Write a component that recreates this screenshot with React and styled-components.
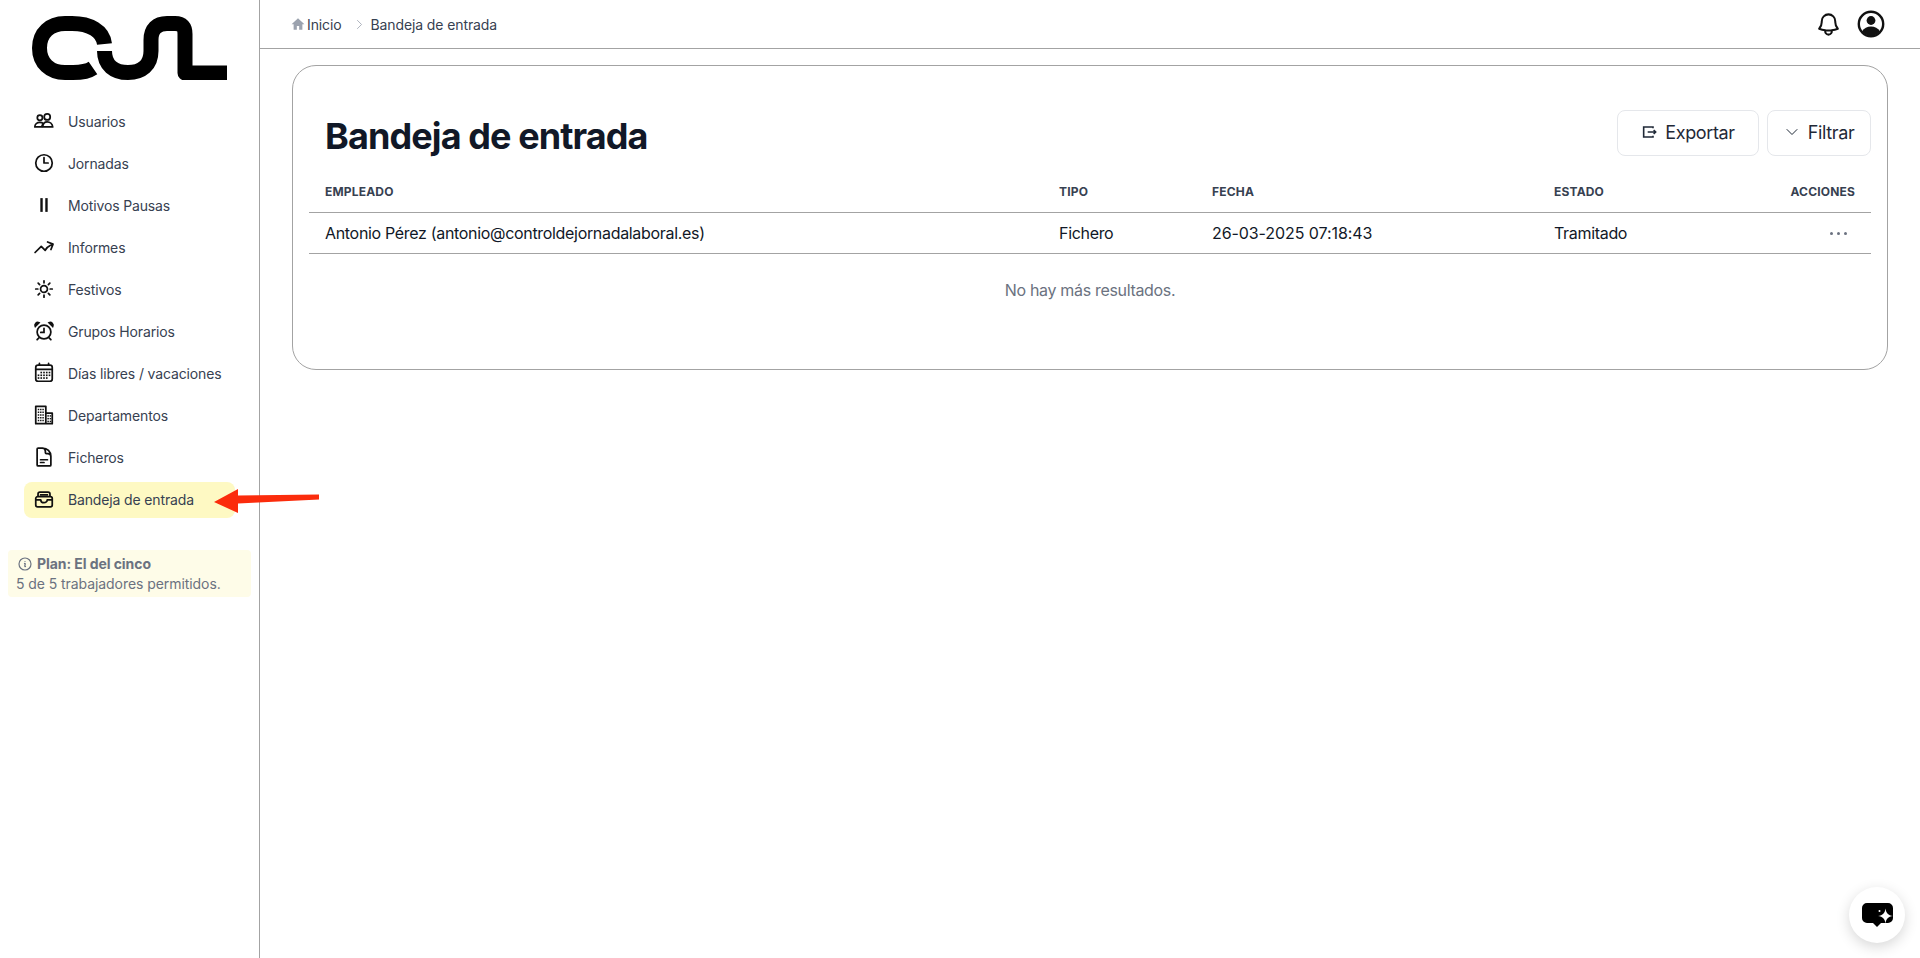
import styled, { createGlobalStyle } from "styled-components";
import {
  HiOutlineClock,
  HiOutlineArrowTrendingUp,
  HiOutlineSun,
  HiOutlineDocumentText,
  HiOutlineInformationCircle,
  HiOutlineBell,
  HiOutlineChevronRight,
  HiOutlineChevronDown,
} from "react-icons/hi2";

const GlobalStyle = createGlobalStyle`
  * { box-sizing: border-box; }
  html, body { margin: 0; padding: 0; background: #fff; }
  body {
    font-family: Inter, "Liberation Sans", sans-serif;
    letter-spacing: -0.02em;
    overflow: hidden;
  }
`;

const Layout = styled.div`
  display: flex;
  min-height: 958px;
`;
const Sidebar = styled.aside`
  width: 260px;
  flex-shrink: 0;
  border-right: 1px solid #a3a3a3;
  padding-top: 16px;
`;
const Logo = styled.svg`
  display: block;
  margin-left: 32px;
  width: 195px;
  height: 64px;
`;
const Nav = styled.nav`
  display: flex;
  flex-direction: column;
  gap: 6px;
  margin: 24px 24px 0;
  width: 211px;
`;
const NavItem = styled.a`
  display: flex;
  align-items: center;
  gap: 13px;
  height: 36px;
  padding: 0 0 2px 9px;
  border-radius: 8px;
  font-size: 14px;
  letter-spacing: -0.01em;
  color: #374151;
  background: ${(p) => (p.$active ? "#fef9c3" : "transparent")};
`;
const NavIcon = styled.span`
  display: flex;
  width: 22px;
  height: 22px;
  color: #111;
  svg {
    width: 22px;
    height: 22px;
    stroke-width: 1.9;
  }
`;
const PlanBox = styled.div`
  margin: 32px 8px 0 8px;
  padding: 4px 8px 3px;
  height: 47px;
  background: #fefce8;
  border-radius: 4px;
  font-size: 14px;
  line-height: 20px;
  letter-spacing: -0.005em;
  color: #6b7280;
`;
const PlanTitle = styled.div`
  display: flex;
  align-items: center;
  gap: 4px;
  font-weight: 700;
  padding-left: 1px;
  svg {
    width: 16px;
    height: 16px;
    stroke-width: 1.8;
  }
`;
const Main = styled.main`
  flex: 1;
  min-width: 0;
`;
const TopBar = styled.header`
  display: flex;
  align-items: center;
  justify-content: space-between;
  height: 49px;
  padding: 0 32px;
  border-bottom: 1px solid #a3a3a3;
`;
const Breadcrumb = styled.div`
  display: flex;
  align-items: center;
  font-size: 14px;
  letter-spacing: -0.008em;
  color: #374151;
`;
const HomeIcon = styled.svg`
  width: 14px;
  height: 14px;
  color: #9ca3af;
  margin: 0 2px 0 -1px;
`;
const CrumbArrow = styled(HiOutlineChevronRight)`
  width: 13px;
  height: 13px;
  color: #9ca3af;
  margin: 0 5px 0 11px;
`;
const TopActions = styled.div`
  display: flex;
  align-items: center;
  gap: 15px;
  margin-right: 3px;
`;
const BellIcon = styled(HiOutlineBell)`
  width: 27px;
  height: 27px;
  color: #111;
  stroke-width: 1.8;
`;
const Card = styled.section`
  margin: 16px 32px 0;
  height: 305px;
  padding: 44px 16px 0;
  border: 1px solid #a3a3a3;
  border-radius: 24px;
`;
const CardHead = styled.div`
  display: flex;
  align-items: flex-start;
  justify-content: space-between;
  height: 63px;
`;
const Title = styled.h1`
  margin: 0;
  padding: 4px 0 0 16px;
  font-size: 36px;
  line-height: 44px;
  font-weight: 700;
  letter-spacing: -0.025em;
  color: #111827;
`;
const Buttons = styled.div`
  display: flex;
  gap: 8px;
`;
const Button = styled.button`
  display: flex;
  align-items: center;
  justify-content: center;
  gap: 8px;
  width: ${(p) => p.$width}px;
  height: 46px;
  padding: 0 0 2px;
  border: 1px solid #e5e7eb;
  border-radius: 8px;
  background: #fff;
  font-family: inherit;
  font-size: 18px;
  letter-spacing: -0.02em;
  color: #1f2937;
  svg {
    width: 16px;
    height: 16px;
  }
`;
const Row = styled.div`
  display: grid;
  grid-template-columns: 734px 153px 342px 1fr 120px;
  align-items: center;
  height: ${(p) => p.$height}px;
  padding-bottom: ${(p) => p.$pad || 0}px;
  border-bottom: 1px solid #a3a3a3;
`;
const HeadCell = styled.div`
  padding: 0 16px;
  font-size: 12px;
  font-weight: 700;
  letter-spacing: 0.015em;
  text-transform: uppercase;
  color: #374151;
  text-align: ${(p) => (p.$right ? "right" : "left")};
`;
const Cell = styled.div`
  padding: 0 16px;
  font-size: 16px;
  letter-spacing: ${(p) => (p.$date ? "-0.005em" : "-0.02em")};
  color: #111827;
`;
const DotsCell = styled.div`
  display: flex;
  justify-content: flex-end;
  gap: 4px;
  padding-right: 24px;
`;
const Dot = styled.span`
  width: 3px;
  height: 3px;
  border-radius: 50%;
  background: #6b7280;
`;
const Empty = styled.div`
  padding-top: 24px;
  text-align: center;
  font-size: 16px;
  line-height: 24px;
  color: #6b7280;
`;
const Arrow = styled.svg`
  position: fixed;
  left: 210px;
  top: 485px;
  width: 112px;
  height: 32px;
`;
const ChatButton = styled.button`
  position: fixed;
  left: 1849px;
  top: 887px;
  width: 56px;
  height: 56px;
  padding: 0;
  border: none;
  border-radius: 50%;
  background: #fff;
  box-shadow: 0 4px 14px rgba(0, 0, 0, 0.16);
  display: flex;
  align-items: center;
  justify-content: center;
`;

const UsersIcon = () => (
  <svg viewBox="0 0 24 24" fill="none" stroke="currentColor" strokeLinecap="round" strokeLinejoin="round">
    <circle cx="7.500" cy="8.500" r="2.800" />
    <circle cx="15.500" cy="7.500" r="3.300" />
    <path d="M2 18.500c0-3 2.500-5 5.500-5 1.500 0 2.800.4 3.800 1.300-1 .9-1.600 2.200-1.800 3.700z" />
    <path d="M10.500 18.500c.3-3.500 2.300-5.500 5-5.500s5.700 2 6 5.500z" />
  </svg>
);

const PauseIcon = () => (
  <svg viewBox="0 0 24 24" fill="currentColor" stroke="none">
    <rect x="8" y="4.500" width="2.600" height="15" />
    <rect x="13.400" y="4.500" width="2.600" height="15" />
  </svg>
);

const AlarmIcon = () => (
  <svg viewBox="0 0 24 24" fill="none" stroke="currentColor" strokeLinecap="round">
    <circle cx="12" cy="13" r="7.500" />
    <path d="M12 9v4.500H8.500M6.500 19.500 4.500 21.500M17.500 19.500l2 2" />
    <path d="M2.500 7 6.500 3a3 3 0 0 0-4 4zM21.500 7l-4-4a3 3 0 0 1 4 4z" fill="currentColor" />
  </svg>
);

const calendarDots = [
  [9, 11.5], [12, 11.5], [15, 11.5], [18, 11.5],
  [6, 14.5], [9, 14.5], [12, 14.5], [15, 14.5], [18, 14.5],
  [6, 17.5], [9, 17.5], [12, 17.5], [15, 17.5],
];

const CalendarIcon = () => (
  <svg viewBox="0 0 24 24" fill="none" stroke="currentColor" strokeLinecap="round">
    <rect x="3" y="3.500" width="18" height="17.500" rx="2.500" />
    <path d="M3 8h18M7 1.500v2M17 1.500v2" />
    {calendarDots.map(([x, y]) => (
      <rect key={`${x}-${y}`} x={x - 0.9} y={y - 0.9} width="1.800" height="1.800" fill="currentColor" stroke="none" />
    ))}
  </svg>
);

const towerDots = [6, 8.5, 11].flatMap((x) => [6, 9, 12, 15, 18].map((y) => [x, y]));
const wingDots = [16.5, 19].flatMap((x) => [13, 16, 19].map((y) => [x, y]));

const BuildingIcon = () => (
  <svg viewBox="0 0 24 24" fill="none" stroke="currentColor" strokeLinejoin="round">
    <path d="M3 21.500V2.500h11v19zM14 10h7v11.500h-7" />
    {[...towerDots, ...wingDots].map(([x, y]) => (
      <rect key={`${x}-${y}`} x={x - 0.8} y={y - 0.8} width="1.600" height="1.600" fill="currentColor" stroke="none" />
    ))}
  </svg>
);

const TrayIcon = () => (
  <svg viewBox="0 0 24 24" fill="none" stroke="currentColor" strokeLinejoin="round">
    <path d="M5.500 9.500V6.500a2 2 0 0 1 2-2h9a2 2 0 0 1 2 2v3" />
    <path d="M7.500 7.500h9" />
    <path d="M3 11.500a2 2 0 0 1 2-2h14a2 2 0 0 1 2 2v7a2 2 0 0 1-2 2H5a2 2 0 0 1-2-2z" />
    <path d="M3 13h5.500a3.500 3 0 0 0 7 0H21" />
  </svg>
);

const ExportIcon = () => (
  <svg viewBox="0 0 24 24" fill="none" stroke="currentColor" strokeWidth="2.400">
    <path d="M18 6.500V4.500H4v15h14v-2" />
    <path d="M10 12h12M19 9l3 3-3 3" />
  </svg>
);

const UserRingIcon = () => (
  <svg width="28" height="28" viewBox="0 0 28 28">
    <circle cx="14" cy="14" r="12.200" fill="none" stroke="#111" strokeWidth="2.400" />
    <circle cx="14" cy="10.500" r="4.400" fill="#111" />
    <path d="M5 21.500c2-3.600 5.200-5 9-5s7 1.400 9 5c-2.300 2.600-5.500 4.200-9 4.200s-6.700-1.600-9-4.200z" fill="#111" />
  </svg>
);

const ChatIcon = () => (
  <svg width="32" height="24" viewBox="0 0 32 24">
    <path d="M6 0h21a5 5 0 0 1 5 5v10a5 5 0 0 1-5 5H20l-4 4-4-4H6a5 5 0 0 1-5-5V5a5 5 0 0 1 5-5z" fill="#000" />
    <path d="M24.500 5.500c.8 5 2.500 6.700 7.500 7.500-5 .8-6.700 2.500-7.500 7.500-.8-5-2.500-6.700-7.500-7.500 5-.8 6.700-2.500 7.500-7.500z" fill="#fff" />
    <circle cx="18.500" cy="8" r="1" fill="#fff" />
  </svg>
);

const menu = [
  { label: "Usuarios", icon: <UsersIcon /> },
  { label: "Jornadas", icon: <HiOutlineClock /> },
  { label: "Motivos Pausas", icon: <PauseIcon /> },
  { label: "Informes", icon: <HiOutlineArrowTrendingUp /> },
  { label: "Festivos", icon: <HiOutlineSun /> },
  { label: "Grupos Horarios", icon: <AlarmIcon /> },
  { label: "Días libres / vacaciones", icon: <CalendarIcon /> },
  { label: "Departamentos", icon: <BuildingIcon /> },
  { label: "Ficheros", icon: <HiOutlineDocumentText /> },
  { label: "Bandeja de entrada", icon: <TrayIcon />, active: true },
];

const App = () => {
  return (
    <>
      <GlobalStyle />
      <Layout>
        <Sidebar>
          <Logo viewBox="32 16 195 64" fill="none" stroke="#000" strokeWidth="15">
            <path d="M104.500 44C103 31 90 23.500 72 23.500H65C50 23.500 39.500 33 39.500 48S50 72.500 65 72.500H73C81 72.500 88 71.500 93 68" />
            <path d="M104.500 51C104.500 65 114 72.500 128 72.500S151 65 151 51V40C151 29 157 23.500 167 23.500H175C182 23.500 185 27 185 34V73H227" strokeLinejoin="round" />
          </Logo>
          <Nav>
            {menu.map((item) => (
              <NavItem key={item.label} $active={item.active}>
                <NavIcon>{item.icon}</NavIcon>
                {item.label}
              </NavItem>
            ))}
          </Nav>
          <PlanBox>
            <PlanTitle>
              <HiOutlineInformationCircle />
              Plan: El del cinco
            </PlanTitle>
            5 de 5 trabajadores permitidos.
          </PlanBox>
        </Sidebar>
        <Main>
          <TopBar>
            <Breadcrumb>
              <HomeIcon viewBox="0 0 24 24" fill="currentColor">
                <path d="M12 2 1 12.500h3.500V22H10v-6.500h4V22h5.500v-9.500H23z" />
              </HomeIcon>
              Inicio
              <CrumbArrow />
              Bandeja de entrada
            </Breadcrumb>
            <TopActions>
              <BellIcon />
              <UserRingIcon />
            </TopActions>
          </TopBar>
          <Card>
            <CardHead>
              <Title>Bandeja de entrada</Title>
              <Buttons>
                <Button $width={142}>
                  <ExportIcon />
                  Exportar
                </Button>
                <Button $width={104}>
                  <HiOutlineChevronDown />
                  Filtrar
                </Button>
              </Buttons>
            </CardHead>
            <Row $height={40} $pad={2}>
              <HeadCell>Empleado</HeadCell>
              <HeadCell>Tipo</HeadCell>
              <HeadCell>Fecha</HeadCell>
              <HeadCell>Estado</HeadCell>
              <HeadCell $right>Acciones</HeadCell>
            </Row>
            <Row $height={41}>
              <Cell>Antonio Pérez (antonio@controldejornadalaboral.es)</Cell>
              <Cell>Fichero</Cell>
              <Cell $date>26-03-2025 07:18:43</Cell>
              <Cell>Tramitado</Cell>
              <DotsCell>
                <Dot />
                <Dot />
                <Dot />
              </DotsCell>
            </Row>
            <Empty>No hay más resultados.</Empty>
          </Card>
        </Main>
      </Layout>
      <Arrow viewBox="0 0 112 32">
        <path d="M4 17 28 4V10.500L109 9.500V14.500L28 18.500V28z" fill="#fb2c0c" />
      </Arrow>
      <ChatButton>
        <ChatIcon />
      </ChatButton>
    </>
  );
};

export default App;
